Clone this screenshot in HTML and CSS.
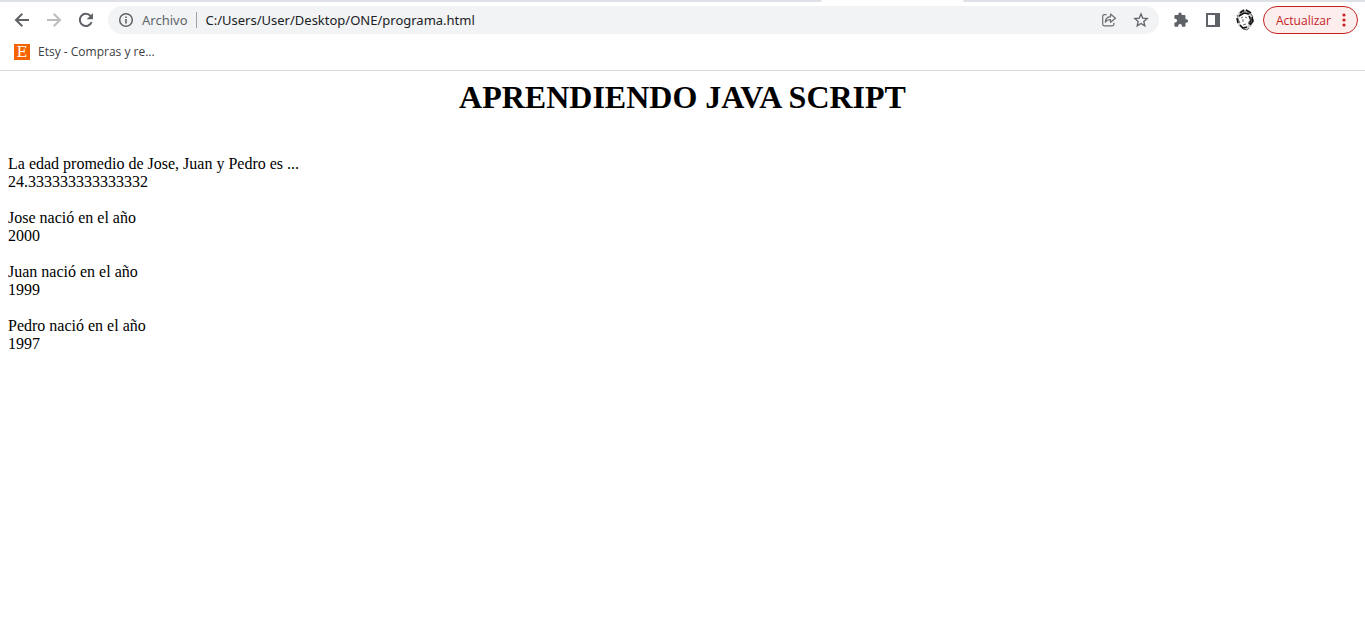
FILE: index.html
```html
<!DOCTYPE html>
<html lang="es">
<head>
<meta charset="utf-8">
<title>programa.html</title>
<link rel="stylesheet" href="styles.css">
</head>
<body>
<header class="browser">
  <div class="tabstrip"><span class="tabs-left"></span><span class="tab-active"></span><span class="tabs-right"></span></div>
  <nav class="toolbar" aria-label="Navegación">
    <div class="nav-buttons">
      <button class="icon-btn" aria-label="Atrás"><svg width="16" height="16" viewBox="0 0 16 16"><path d="M15 8H2M8.300 1.700L2 8l6.300 6.300" fill="none" stroke="#5f6368" stroke-width="2"/></svg></button>
      <button class="icon-btn" aria-label="Adelante" disabled><svg width="16" height="16" viewBox="0 0 16 16"><path d="M1 8h13M7.700 1.700L14 8l-6.300 6.300" fill="none" stroke="#babcbe" stroke-width="2"/></svg></button>
      <button class="icon-btn" aria-label="Recargar"><svg width="16" height="16" viewBox="0 0 16 16"><path d="M13.600 10.200A6.100 6.100 0 1 1 12.600 4" fill="none" stroke="#5f6368" stroke-width="2"/><path d="M15 1v6.300H8.700z" fill="#5f6368"/></svg></button>
    </div>
    <div class="omnibox">
      <svg class="info" width="16" height="16" viewBox="0 0 16 16"><circle cx="8" cy="8" r="6.300" fill="none" stroke="#5f6368" stroke-width="1.500"/><path d="M7.200 7h1.600v4.500H7.200zM7.200 4.400h1.600V6H7.200z" fill="#5f6368"/></svg>
      <label class="scheme" for="url">Archivo</label>
      <input class="url" id="url" type="text" value="C:/Users/User/Desktop/ONE/programa.html">
      <button class="icon-btn" aria-label="Compartir"><svg width="16" height="16" viewBox="0 0 16 16"><path d="M5.500 2.600H3.200Q1.700 2.600 1.700 4.100v8.200q0 1.500 1.500 1.500h8.200q1.500 0 1.500-1.500v-1.500M4.300 10.200C4.500 6.700 6.500 4.900 9.500 4.700V2l5 4.200-5 4.100V7.700C7.200 7.600 5.600 8.300 4.300 10.200z" fill="none" stroke="#6b6f73" stroke-width="1.200" stroke-linejoin="round"/></svg></button>
      <button class="icon-btn" aria-label="Añadir a marcadores"><svg width="16" height="16" viewBox="0 0 16 16"><path d="M8 2l1.700 4.100 4.500.4-3.400 2.900 1 4.400L8 11.500l-3.800 2.300 1-4.400-3.400-2.900 4.500-.4z" fill="none" stroke="#5f6368" stroke-width="1.300"/></svg></button>
    </div>
    <div class="actions">
      <button class="icon-btn" aria-label="Extensiones"><svg width="16" height="16" viewBox="0 0 16 16"><path d="M13.400 7.300h-.9V4.400c0-.8-.6-1.300-1.300-1.300H8.700v-.8a1.700 1.700 0 0 0-3.400 0v.8H2.600c-.7 0-1.200.5-1.200 1.300v2.300h.8a1.900 1.900 0 0 1 0 3.800h-.8v2.900c0 .7.500 1.300 1.200 1.300h2.700v-.9a1.800 1.800 0 0 1 3.600 0v.9h2.300c.7 0 1.300-.6 1.300-1.300v-2.700h.9a1.700 1.700 0 0 0 0-3.400z" fill="#5f6368"/></svg></button>
      <button class="icon-btn" aria-label="Panel lateral"><svg width="16" height="16" viewBox="0 0 16 16"><path d="M1 1h14v14H1zM3 3v10h7V3z" fill="#5f6368" fill-rule="evenodd"/></svg></button>
      <button class="icon-btn" aria-label="Perfil"><svg width="20" height="22" viewBox="0 0 20 22"><path d="M5 2C8 0 13 0 15 2c3 3 4 9 3 12-2 4-4 6-8 7-4-1-6-4-8-7C1 9 2 5 5 2z" fill="#ccc"/><path d="M5 7l5-3 4 3v6l-2 5-4 1-3-4-1-4z" fill="#fff"/><path d="M5 4l4-3M11 1l5 3M4 7l5-3 5 1M2 9l1 5M14 7l2 4-2 4M17 8l1 4-3 4M5 16l3 3 4-1" fill="none" stroke="#111" stroke-width="1.600"/><path d="M8 3l3 0M12 3l3 2M6 9l2-1M10 8l2 1M8 10v3M8 16l3-1M16 5l2 3M2 6l1 2M3 10l2 4M13 13l3 1M8 20l4 1 2-2M15 9l2 5" fill="none" stroke="#444" stroke-width=".8"/></svg></button>
      <button class="update">Actualizar<svg width="4" height="16" viewBox="0 0 4 16" fill="#c5221f"><circle cx="2" cy="3" r="1.600"/><circle cx="2" cy="8" r="1.600"/><circle cx="2" cy="13" r="1.600"/></svg></button>
    </div>
  </nav>
  <nav class="bookmarks" aria-label="Marcadores">
    <a class="bookmark" href="#"><span class="etsy">E</span>Etsy - Compras y re...</a>
  </nav>
</header>
<main class="page">
  <h1 class="title">APRENDIENDO JAVA SCRIPT</h1>
  <p class="line">La edad promedio de Jose, Juan y Pedro es ...<br>24.333333333333332</p>
  <p class="line">Jose nació en el año<br>2000</p>
  <p class="line">Juan nació en el año<br>1999</p>
  <p class="line">Pedro nació en el año<br>1997</p>
</main>
</body>
</html>
```
FILE: styles.css
```css
* { box-sizing: border-box; }
body { margin: 0; background: #fff; color: #000; font-family: "Liberation Serif", "Times New Roman", serif; }
.browser { font-family: "Noto Sans", sans-serif; border-bottom: 1px solid #dadce0; }
.tabstrip { display: flex; height: 2px; background: #fff; }
.tabs-left { flex: 822; background: #dee1e6; border-bottom-right-radius: 2px; }
.tab-active { flex: 141; }
.tabs-right { flex: 402; background: #dee1e6; border-bottom-left-radius: 2px; }
.toolbar { display: flex; align-items: center; padding: 4px 7px 0 14px; }
.nav-buttons { display: flex; gap: 16px; margin-right: 14px; }
.icon-btn { display: flex; align-items: center; justify-content: center; flex: none; width: 16px; height: 22px; padding: 0; border: 0; background: none; }
.icon-btn svg { flex: none; }
.omnibox { display: flex; flex: 1; align-items: center; gap: 16px; height: 28px; padding: 0 10px; border-radius: 14px; background: #f1f3f4; font-size: 13px; }
.info { flex: none; margin-right: -8px; }
.scheme { padding-right: 8px; border-right: 1px solid #9aa0a6; color: #5f6368; line-height: 16px; margin-right: -7px; }
.url { flex: 1; min-width: 0; height: 24px; padding: 0; border: 0; outline: 0; background: none; color: #202124; font: inherit; }
.actions { display: flex; align-items: center; gap: 16px; margin-left: 14px; }
.update { display: flex; align-items: center; justify-content: space-between; width: 95px; height: 28px; margin-left: -6px; padding: 0 11px 0 12px; border: 1px solid #c5221f; border-radius: 14px; background: #fceeed; color: #c5221f; font: 12px "Open Sans", sans-serif; }
.bookmarks { display: flex; height: 36px; padding: 0 14px; align-items: center; }
.bookmark { display: flex; align-items: center; gap: 8px; color: #3c4043; font: 12px/16px "Open Sans", sans-serif; text-decoration: none; }
.etsy { width: 16px; height: 16px; background: #f56400; color: #fff; font: 15px/16px "DejaVu Serif", serif; text-align: center; }
.page { padding: 8px; font-size: 16px; line-height: 18px; }
.title { margin: 0 0 39px; font-size: 32px; line-height: 37px; text-align: center; }
.line { margin: 0 0 18px; }
```
